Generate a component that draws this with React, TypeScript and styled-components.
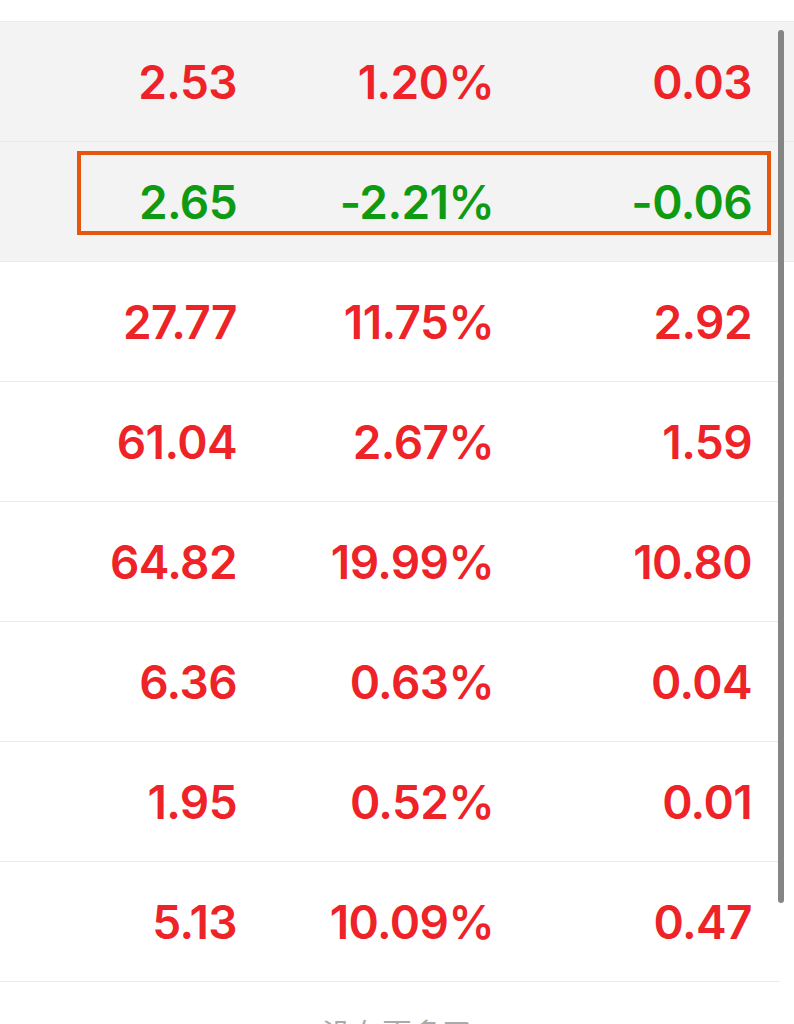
import React from 'react';
import styled, { createGlobalStyle } from 'styled-components';

const GlobalStyle = createGlobalStyle`
  html, body {
    margin: 0;
    padding: 0;
    background: #fff;
    overflow: hidden;
  }
  body {
    font-family: Inter, 'Noto Sans CJK SC', sans-serif;
  }
`;

type Quote = {
  price: string;
  pct: string;
  change: string;
  shaded?: boolean;
  marked?: boolean;
};

const quotes: Quote[] = [
  { price: '2.53', pct: '1.20%', change: '0.03', shaded: true },
  { price: '2.65', pct: '-2.21%', change: '-0.06', shaded: true, marked: true },
  { price: '27.77', pct: '11.75%', change: '2.92' },
  { price: '61.04', pct: '2.67%', change: '1.59' },
  { price: '64.82', pct: '19.99%', change: '10.80' },
  { price: '6.36', pct: '0.63%', change: '0.04' },
  { price: '1.95', pct: '0.52%', change: '0.01' },
  { price: '5.13', pct: '10.09%', change: '0.47' },
];

function App() {
  return (
    <Page>
      <GlobalStyle />
      <TopGap />
      <List>
        {quotes.map((q, i) => {
          const down = q.change.startsWith('-');
          return (
            <Row key={i} $shaded={q.shaded}>
              <Cell $down={down} $w={237}>{q.price}</Cell>
              <Cell $down={down} $w={257}>{q.pct}</Cell>
              <Cell $down={down} $w={258}>{q.change}</Cell>
              {q.marked && <Highlight />}
            </Row>
          );
        })}
      </List>
      <Footer>没有更多了</Footer>
      <ScrollThumb />
    </Page>
  );
}

export default App;

const Page = styled.div`
  position: relative;
  width: 794px;
  height: 1024px;
  overflow: hidden;
`;

const TopGap = styled.div`
  height: 21px;
  border-bottom: 1px solid #ececec;
`;

const List = styled.div`
  display: flex;
  flex-direction: column;
`;

const Row = styled.div<{ $shaded?: boolean }>`
  position: relative;
  display: flex;
  align-items: center;
  height: 119px;
  width: ${p => (p.$shaded ? '794px' : '780px')};
  background: ${p => (p.$shaded ? '#f3f3f3' : '#fff')};
  border-bottom: 1px solid #ebebeb;
`;

const Cell = styled.div<{ $down: boolean; $w: number }>`
  flex: none;
  width: ${p => p.$w}px;
  text-align: right;
  font-size: 46px;
  font-weight: 600;
  letter-spacing: -0.6px;
  color: ${p => (p.$down ? '#0f9a14' : '#ee2328')};
`;

const Highlight = styled.div`
  position: absolute;
  left: 77px;
  top: 9px;
  width: 686px;
  height: 76px;
  border: 4px solid #e6560e;
`;

const Footer = styled.div`
  padding-top: 28px;
  text-align: center;
  font-size: 30px;
  color: #aaa;
`;

const ScrollThumb = styled.div`
  position: absolute;
  left: 778px;
  top: 30px;
  width: 6px;
  height: 873px;
  border-radius: 3px;
  background: #858585;
`;
